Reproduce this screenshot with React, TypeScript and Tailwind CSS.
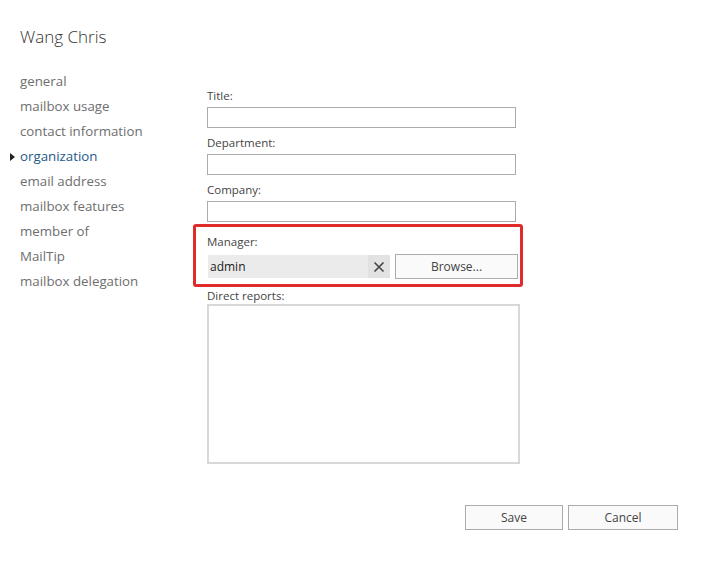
import React from "react";

const navItems = [
  "general",
  "mailbox usage",
  "contact information",
  "organization",
  "email address",
  "mailbox features",
  "member of",
  "MailTip",
  "mailbox delegation",
];

const TextField: React.FC<{ label: string; first?: boolean }> = ({ label, first }) => (
  <div className={first ? "" : "mt-[7px]"}>
    <div className="text-[11.5px] leading-[16px] text-[#444]">{label}</div>
    <div className="mt-[3px] h-[21px] w-[309px] border border-[#ababab] bg-white"></div>
  </div>
);

export default function App() {
  const active = "organization";

  return (
    <div className="relative h-[563px] w-[710px] bg-white font-['Segoe_UI','Open_Sans',sans-serif] text-[#333]">
      <h1 className="pl-5 pt-[26px] text-[17px] font-light leading-[22px] text-[#333]">Wang Chris</h1>

      <div className="flex">
        <nav className="mt-[21px] w-[207px] shrink-0">
          {navItems.map((item) => {
            const on = item === active;
            return (
              <div key={item} className="relative flex h-[25px] items-center pl-5 text-[13.3px]">
                {on && (
                  <span className="absolute left-[10px] top-[9px] h-0 w-0 border-y-[4px] border-l-[5px] border-y-transparent border-l-[#222]"></span>
                )}
                <span className={on ? "text-[#1f5a8a]" : "text-[#6e6e6e]"}>{item}</span>
              </div>
            );
          })}
        </nav>

        <div className="mt-[40px] flex flex-col">
          <TextField label="Title:" first />
          <TextField label="Department:" />
          <TextField label="Company:" />

          <div className="-ml-[14px] mt-[2px] w-[330px] rounded-[3px] border-[3px] border-[#e02b2b] pb-[5px] pl-[11px] pt-[7px]">
            <div className="text-[11.5px] leading-[16px] text-[#444]">Manager:</div>
            <div className="mt-[5px] flex">
              <div className="ml-[1px] flex h-[23px] w-[182px] items-center bg-[#ebebeb]">
                <span className="flex-1 pl-[2px] text-[12px] text-[#222]">admin</span>
                <span className="flex h-full w-[22px] items-center justify-center bg-[#e2e2e2] text-[#444]">
                  <svg width="12" height="12" viewBox="0 0 12 12" fill="none" stroke="currentColor" strokeWidth="1.6">
                    <path d="M1.5 1.5L10.5 10.5M10.5 1.5L1.5 10.5" />
                  </svg>
                </span>
              </div>
              <button className="-mt-[1px] ml-[5px] h-[25px] w-[123px] border border-[#ababab] bg-[#fafafa] text-[12px] text-[#444]">
                Browse...
              </button>
            </div>
          </div>

          <div className="mt-[1px] text-[11.5px] leading-[16px] text-[#444]">Direct reports:</div>
          <div className="h-[160px] w-[313px] border-2 border-[#d8d8d8] bg-white"></div>

          <div className="-mr-[155px] mt-[41px] flex justify-end gap-[5px]">
            <button className="h-[25px] w-[98px] border border-[#ababab] bg-[#fafafa] text-[12px] text-[#444]">Save</button>
            <button className="h-[25px] w-[110px] border border-[#ababab] bg-[#fafafa] text-[12px] text-[#444]">Cancel</button>
          </div>
        </div>
      </div>
    </div>
  );
}
